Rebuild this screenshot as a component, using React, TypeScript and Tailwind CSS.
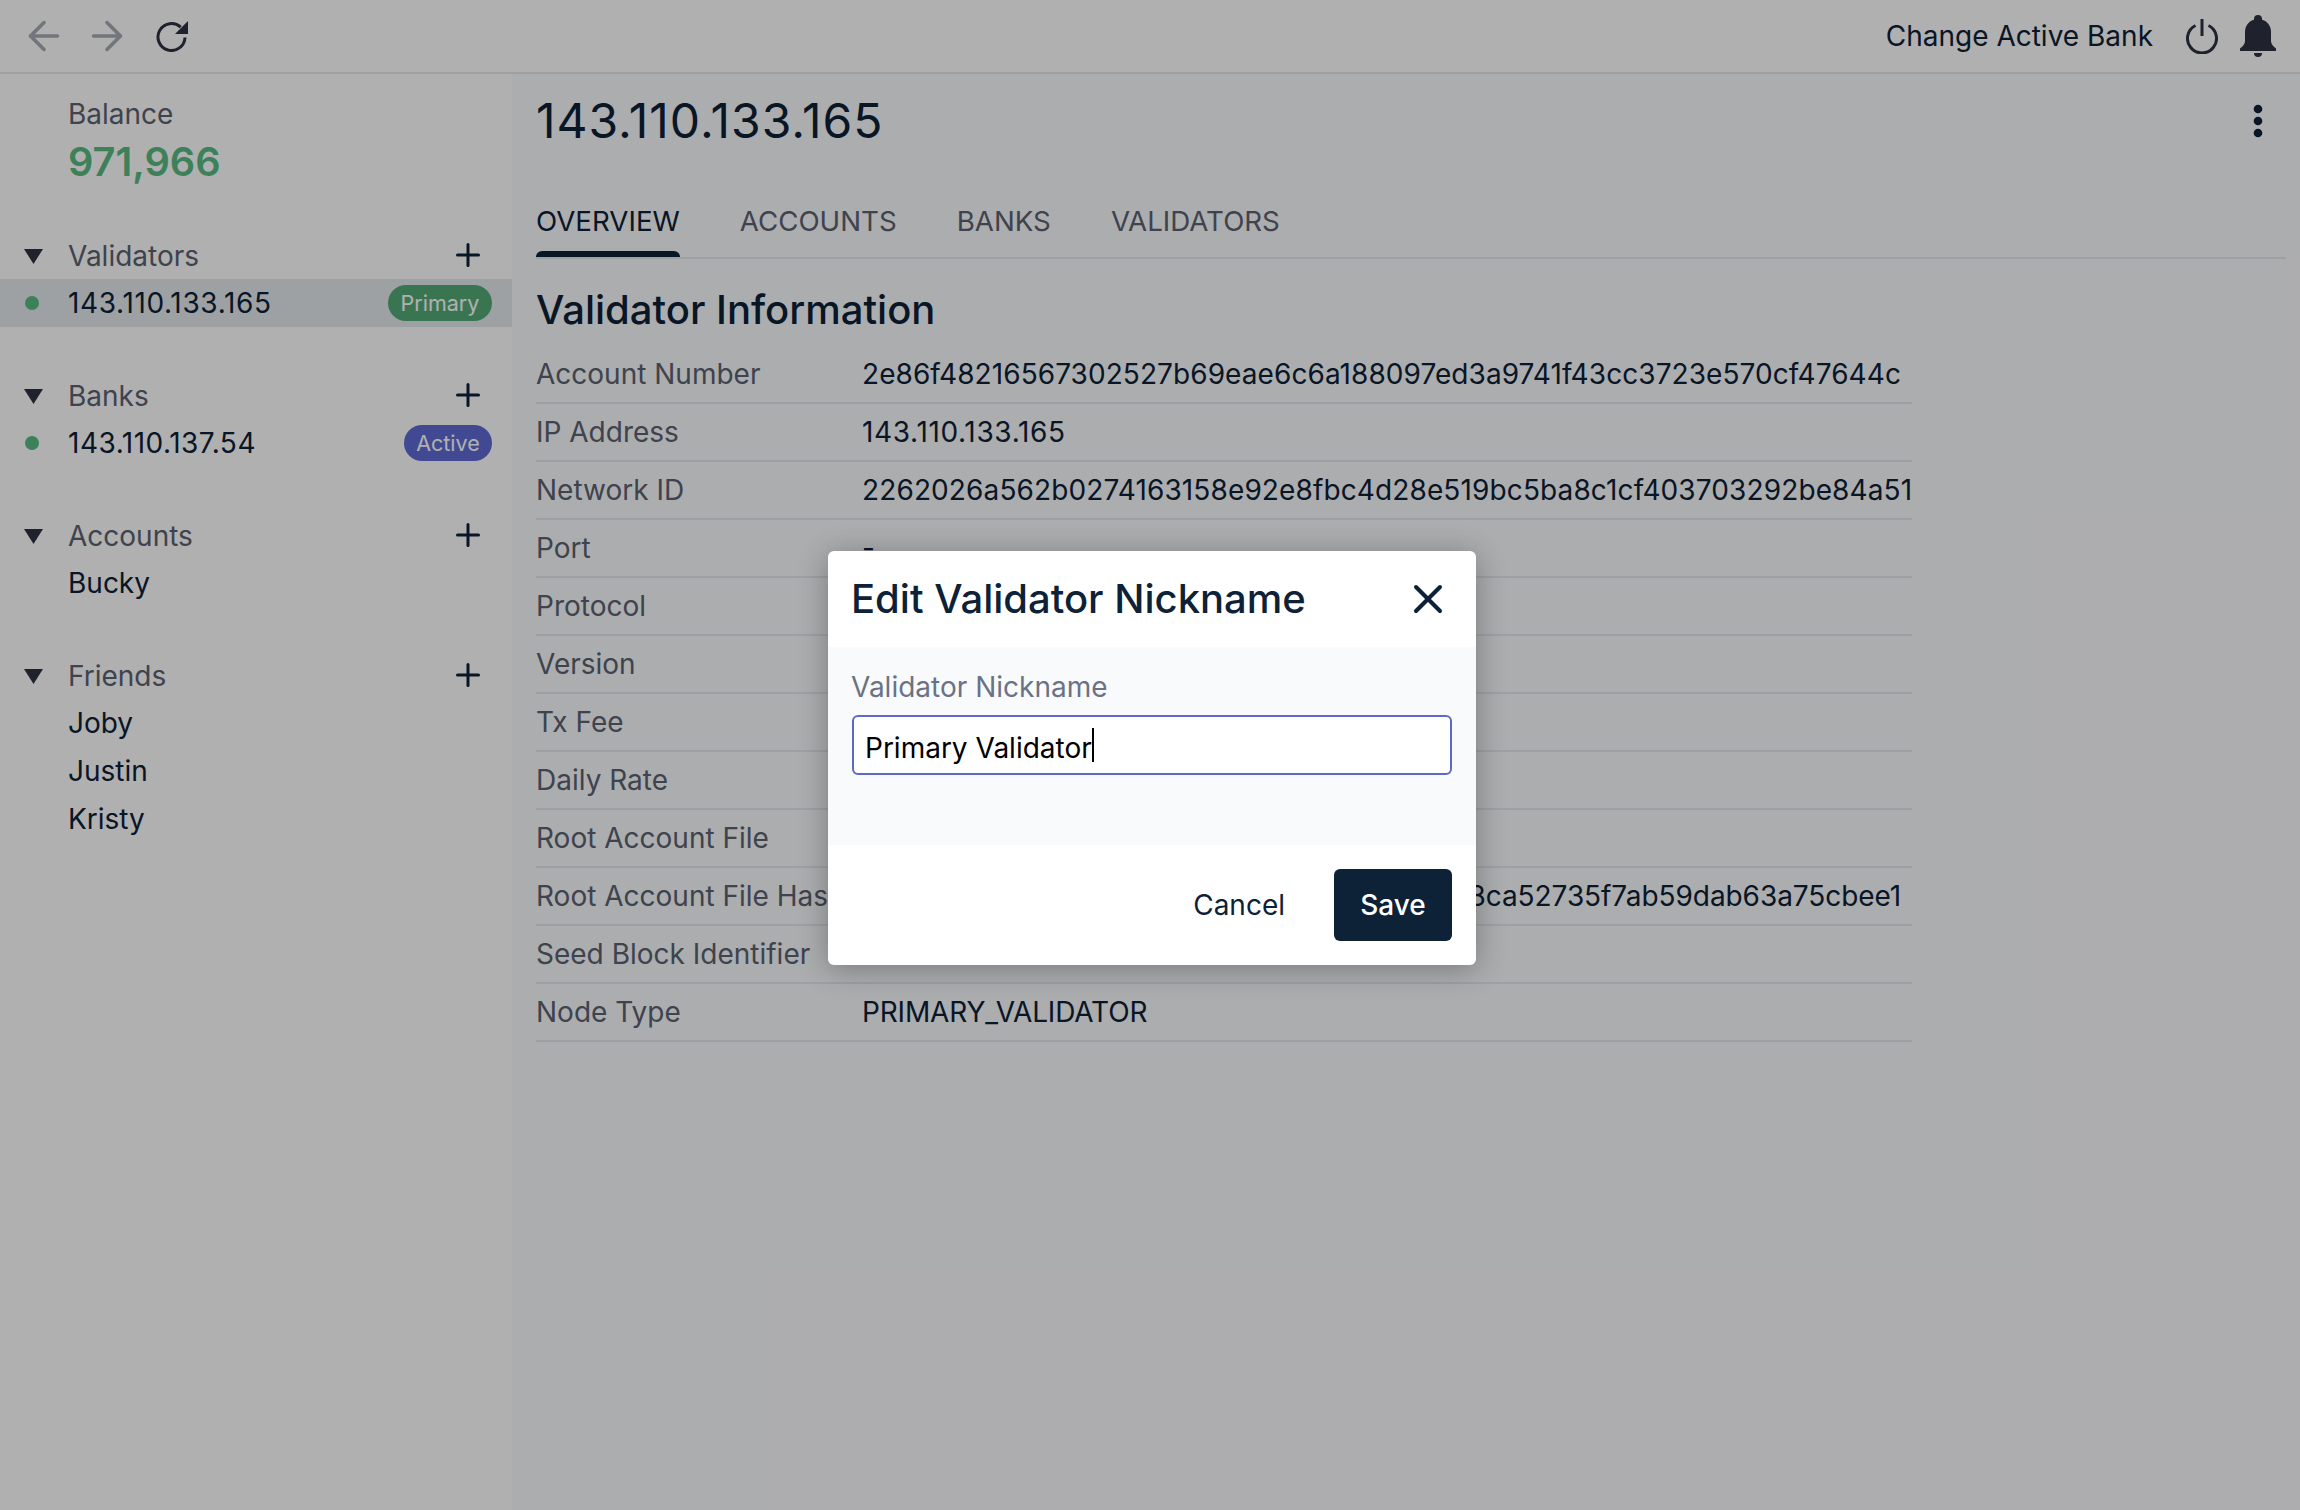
import { ArrowLeft, ArrowRight, Plus, X } from "lucide-react";

const font = "font-['Inter',sans-serif]";

function Triangle() {
  return (
    <svg width="19" height="15" viewBox="0 0 19 15" className="-ml-[1px] text-[#2d3142]">
      <path d="M0 0h19l-9.500 15z" fill="currentColor" />
    </svg>
  );
}

function Reload() {
  return (
    <svg width="32" height="32" viewBox="0 0 32 32" fill="none" className="text-[#2d3142]">
      <path d="M29 17.500a13.500 13.500 0 1 1-4.300-10.400" stroke="currentColor" strokeWidth="3" />
      <path d="M32 1v13H19z" fill="currentColor" />
    </svg>
  );
}

function Power() {
  return (
    <svg width="32" height="36" viewBox="0 0 32 36" fill="none" className="text-[#2d3142]">
      <path d="M9.500 7.500a14.500 14.500 0 1 0 13 0" stroke="currentColor" strokeWidth="3" />
      <path d="M16 1v17" stroke="currentColor" strokeWidth="3" />
    </svg>
  );
}

function Bell() {
  return (
    <svg width="36" height="42" viewBox="0 0 36 42" className="text-[#2d3142]">
      <path
        d="M18 0a4 4 0 0 1 4 4v.7C28 6.400 31 11.500 31 17v9c0 3 2 5 5 7.500V36H0v-2.500C3 31 5 29 5 26v-9C5 11.500 8 6.400 14 4.700V4a4 4 0 0 1 4-4z"
        fill="currentColor"
      />
      <path d="M14 38h8a4 4 0 0 1-8 0z" fill="currentColor" />
    </svg>
  );
}

function Section({ title, children }: { title: string; children: React.ReactNode }) {
  return (
    <div className="mb-[46px]">
      <div className="flex h-[46px] items-center pl-[25px] pr-[26px]">
        <span className="w-[43px]">
          <Triangle />
        </span>
        <span className="flex-1 text-[#5b6170]">{title}</span>
        <Plus size={36} strokeWidth={2} className="-mt-[2px] text-[#0d2137]" />
      </div>
      {children}
    </div>
  );
}

function Item({ label, dot, badge, active, labelClass }: { label: string; dot?: boolean; badge?: React.ReactNode; active?: boolean; labelClass?: string }) {
  return (
    <div className={`flex h-[48px] items-center pl-[25px] pr-[20px] text-[#0d2137] ${active ? "bg-[#e5e9ee]" : ""}`}>
      <span className="w-[43px]">{dot && <span className="block h-[14px] w-[14px] rounded-full bg-[#58bb82]" />}</span>
      <span className={`flex-1 ${labelClass ?? ""}`}>{label}</span>
      {badge}
    </div>
  );
}

const rows = [
  ["Account Number", "2e86f48216567302527b69eae6c6a188097ed3a9741f43cc3723e570cf47644c", "tracking-[0.07px]"],
  ["IP Address", "143.110.133.165", "tracking-[0.65px]"],
  ["Network ID", "2262026a562b0274163158e92e8fbc4d28e519bc5ba8c1cf403703292be84a51", "tracking-[0.12px]"],
  ["Port", "-", ""],
  ["Protocol", "http", ""],
  ["Version", "v1.0", ""],
  ["Tx Fee", "1", ""],
  ["Daily Rate", "1", ""],
  ["Root Account File", "http://143.110.133.165/media/root", ""],
  ["Root Account File Hash", "4694e1ee1dcfd8ee5f989e59ae40a9f751812bf8ca52735f7ab59dab63a75cbee1", "tracking-[-0.07px]"],
  ["Seed Block Identifier", "-", ""],
  ["Node Type", "PRIMARY_VALIDATOR", "tracking-[-0.15px]"],
];

export default function App() {
  return (
    <div className={`relative flex h-[1510px] w-[2300px] flex-col overflow-hidden bg-white ${font}`}>
      <header className="flex h-[74px] shrink-0 items-center border-b-2 border-[#e5e9ee] pl-[21px] pr-[24px]">
        <ArrowLeft size={46} strokeWidth={1.9} className="text-[#a6aab2]" />
        <ArrowRight size={46} strokeWidth={1.9} className="ml-[17px] text-[#a6aab2]" />
        <span className="ml-[26px]"><Reload /></span>
        <span className="ml-auto text-[28px] text-[#0d2137]">Change Active Bank</span>
        <span className="ml-[33px]"><Power /></span>
        <span className="ml-[22px]"><Bell /></span>
      </header>

      <div className="flex flex-1">
        <aside className="w-[512px] shrink-0 pt-[22px] text-[28px]">
          <div className="pl-[68px]">
            <div className="leading-[36px] text-[#5b6170]">Balance</div>
            <div className="mt-[5px] text-[39.700px] font-semibold leading-[50px] text-[#58bb82]">971,966</div>
          </div>
          <div className="mt-[46px]">
            <Section title="Validators">
              <Item
                label="143.110.133.165"
                labelClass="tracking-[0.65px]"
                dot
                active
                badge={<span className="flex h-[36px] w-[104px] items-center justify-center rounded-full bg-[#55aa78] text-[21.500px] text-white">Primary</span>}
              />
            </Section>
            <Section title="Banks">
              <Item
                label="143.110.137.54"
                labelClass="tracking-[0.5px]"
                dot
                badge={<span className="flex h-[36px] w-[88px] items-center justify-center rounded-full bg-[#5e6bd2] text-[21.500px] text-white">Active</span>}
              />
            </Section>
            <Section title="Accounts">
              <Item label="Bucky" />
            </Section>
            <Section title="Friends">
              <Item label="Joby" />
              <Item label="Justin" />
              <Item label="Kristy" />
            </Section>
          </div>
        </aside>

        <main className="flex-1 bg-[#fafbfd] pl-[24px] pr-[14px]">
          <div className="flex items-center justify-between pt-[18px]">
            <h1 className="text-[48px] leading-[58px] tracking-[1px] text-[#0d2137]">143.110.133.165</h1>
            <svg width="12" height="34" viewBox="0 0 12 34" className="mr-[22px] text-[#0d2137]">
              <circle cx="6" cy="5" r="4.300" fill="currentColor" />
              <circle cx="6" cy="17" r="4.300" fill="currentColor" />
              <circle cx="6" cy="29" r="4.300" fill="currentColor" />
            </svg>
          </div>
          <div className="mt-[43px] flex gap-[60px] border-b-2 border-[#e5e9ee] text-[27.700px] text-[#5b6170]">
            <div className="relative h-[64px] pt-[8px] text-[#0d2137]">
              OVERVIEW
              <span className="absolute inset-x-0 bottom-0 h-[6px] rounded-t-md bg-[#0d2137]" />
            </div>
            <div className="pt-[8px]">ACCOUNTS</div>
            <div className="pt-[8px]">BANKS</div>
            <div className="pt-[8px]">VALIDATORS</div>
          </div>
          <h2 className="mt-[27px] text-[40px] font-medium leading-[48px] text-[#0d2137]">Validator Information</h2>
          <div className="mt-[12px] w-[1376px] text-[28px]">
            {rows.map(([label, value, spacing]) => (
              <div key={label} className="flex h-[58px] items-center overflow-hidden whitespace-nowrap border-b-2 border-[#e5e9ee]">
                <span className="w-[326px] shrink-0 text-[#5b6170]">{label}</span>
                <span className={`text-[#0d2137] ${spacing}`}>{value}</span>
              </div>
            ))}
          </div>
        </main>
      </div>

      <div className="absolute inset-0 flex items-start justify-center bg-black/[0.31] pl-[4px] pt-[551px]">
        <div className="w-[648px] overflow-hidden rounded-[6px] bg-white shadow-[0_4px_30px_rgba(0,0,0,0.3)]">
          <div className="flex h-[96px] items-center justify-between pl-[23px] pr-[24px]">
            <span className="text-[40px] font-medium text-[#0d2137]">Edit Validator Nickname</span>
            <X size={48} strokeWidth={2} className="text-[#0d2137]" />
          </div>
          <div className="h-[198px] bg-[#f8fafc] px-[24px] pt-[22px]">
            <div className="-ml-[1px] text-[28px] leading-[36px] text-[#6b7285]">Validator Nickname</div>
            <div className="mt-[10px] flex h-[60px] items-center rounded-[6px] border-2 border-[#5c6ac4] bg-white pl-[11px] text-[28px] text-black">
              <span className="pt-[6px]">Primary Validator</span>
              <span className="h-[34px] w-[2px] bg-black" />
            </div>
          </div>
          <div className="flex h-[120px] items-center justify-end gap-[49px] px-[24px]">
            <span className="text-[28px] text-[#0d2137]">Cancel</span>
            <span className="flex h-[72px] w-[118px] items-center justify-center rounded-[6px] bg-[#0d2137] text-[28px] font-medium text-white">Save</span>
          </div>
        </div>
      </div>
    </div>
  );
}
